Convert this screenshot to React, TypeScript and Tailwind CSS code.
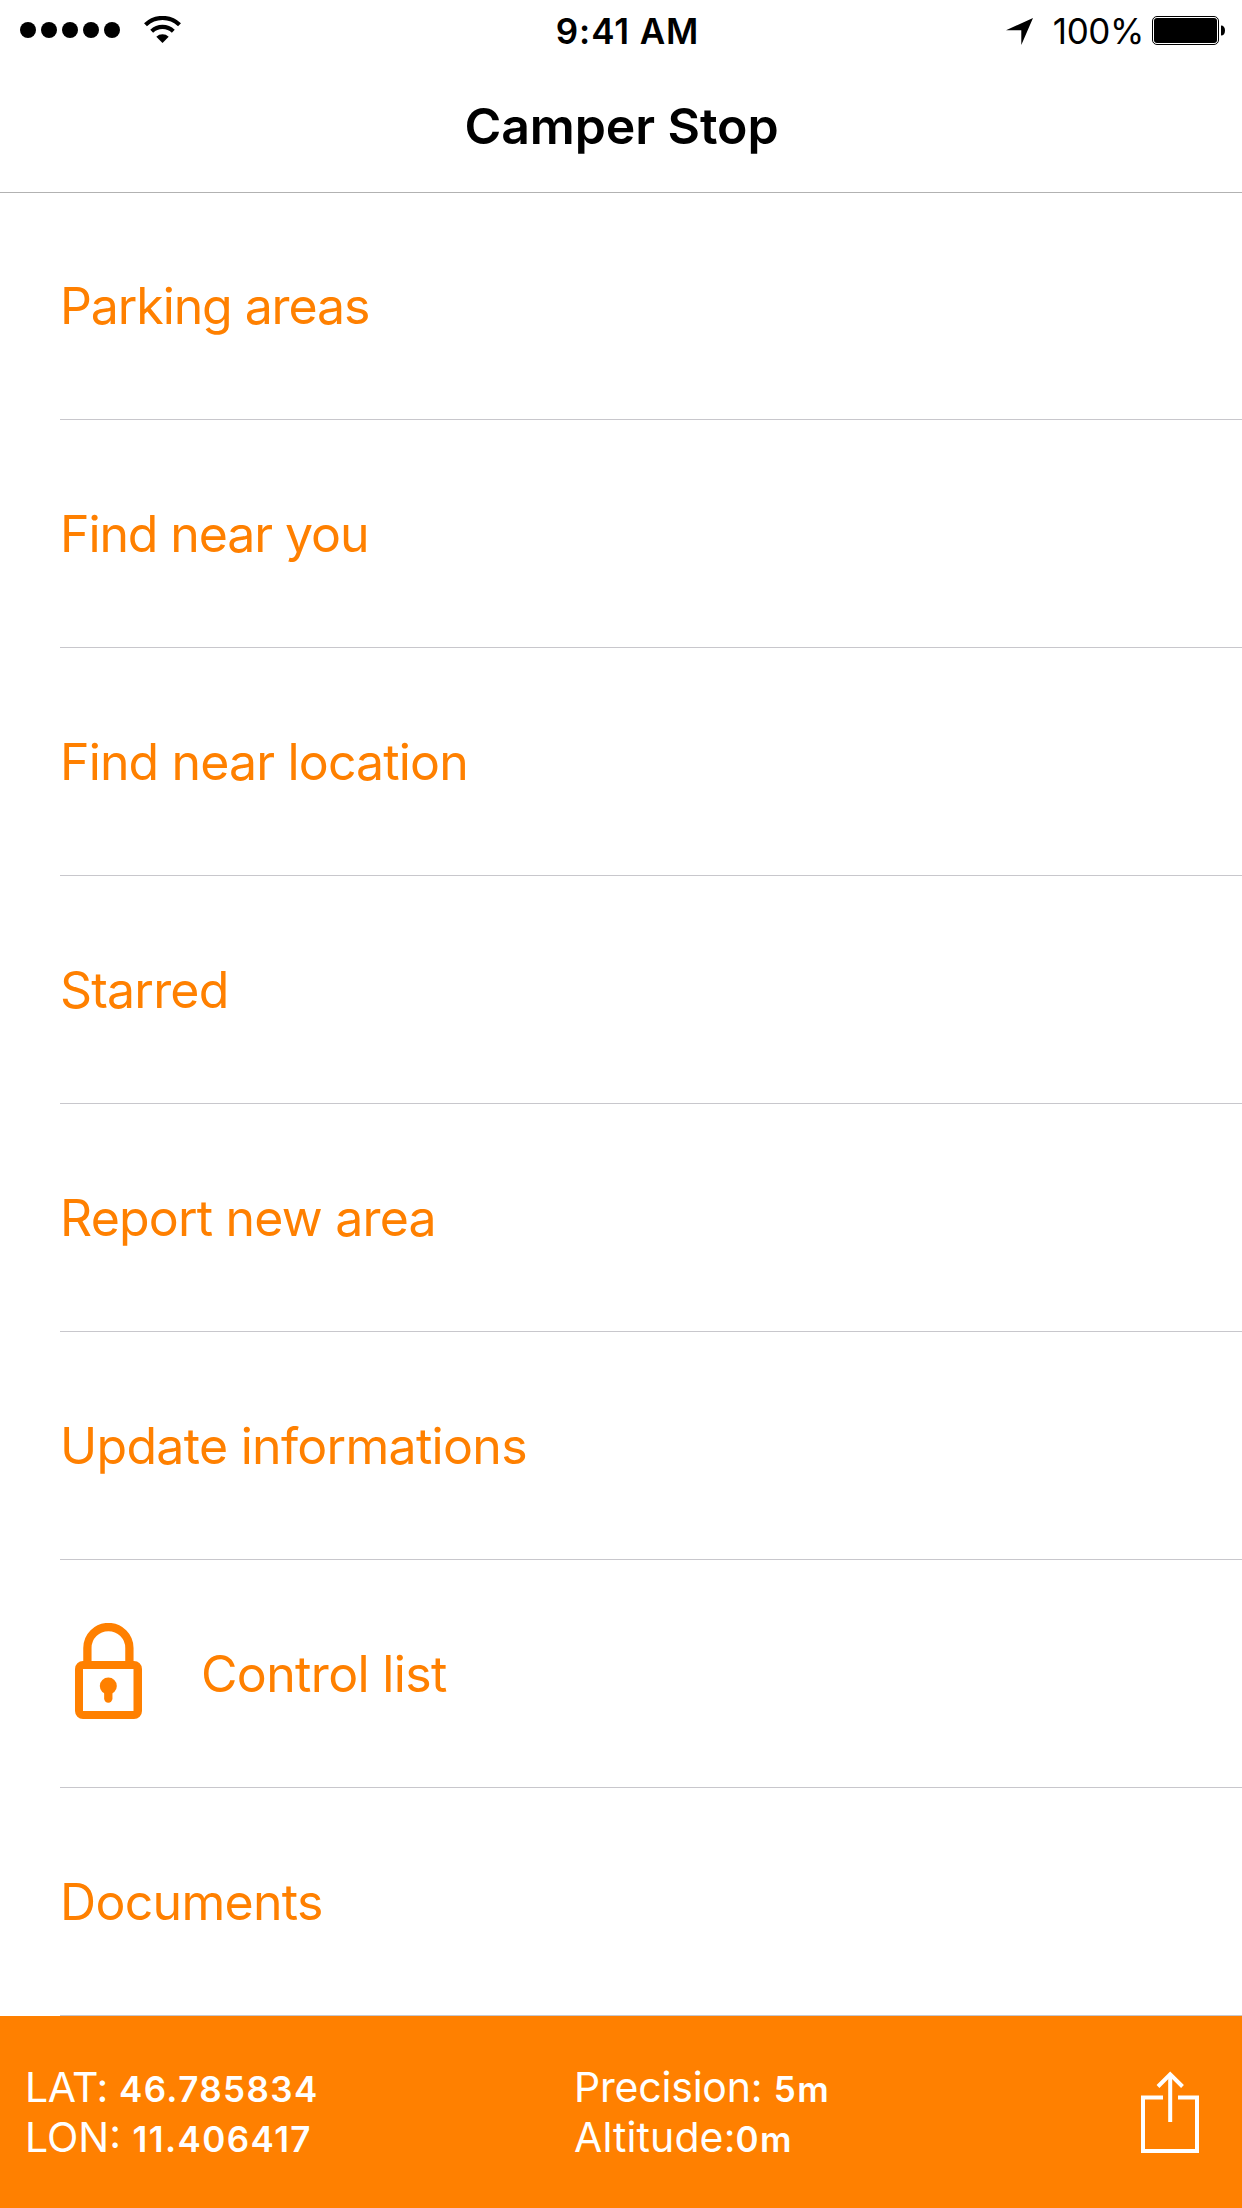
const menuItems = [
  { label: "Parking areas", tracking: "tracking-[-1.1px]" },
  { label: "Find near you", tracking: "tracking-[-1.1px]" },
  { label: "Find near location", tracking: "tracking-[-0.85px]" },
  { label: "Starred", tracking: "tracking-[-0.8px]" },
  { label: "Report new area", tracking: "tracking-[-0.8px]" },
  { label: "Update informations", tracking: "tracking-[-0.7px]" },
  { label: "Control list", tracking: "tracking-[-0.65px]", locked: true },
  { label: "Documents", tracking: "tracking-[-0.7px]" },
];

function WifiIcon() {
  return (
    <svg className="-mt-px ml-6 h-[27px] w-[37px]" viewBox="0 0 37 27" fill="none" stroke="#000" strokeWidth="4.2">
      <path d="M1.5 8.8a24.5 24.5 0 0 1 34 0" />
      <path d="M7.7 15.2a15.8 15.8 0 0 1 21.6 0" />
      <path d="M18.5 27l-6.2-6.3a9 9 0 0 1 12.4 0z" fill="#000" stroke="none" />
    </svg>
  );
}

function LocationIcon() {
  return (
    <svg className="mt-[3px] mr-5 h-[27px] w-[27px]" viewBox="0 0 27 27">
      <path d="M27 0L15.3 27V12.2H0z" />
    </svg>
  );
}

function BatteryIcon() {
  return (
    <svg className="mt-px ml-2 h-[29px] w-[74px]" viewBox="0 0 74 29">
      <rect x="0.5" y="0.5" width="66" height="28" rx="4.5" fill="none" stroke="#000" />
      <rect x="2" y="2" width="63" height="25" rx="3" />
      <path d="M69 9.5c2.7 0 4 2 4 5s-1.3 5-4 5z" />
    </svg>
  );
}

function LockIcon() {
  return (
    <svg className="mt-[-6px] mr-[59px] ml-[15px] h-[96px] w-[67px] shrink-0" viewBox="0 0 67 96" fill="none">
      <path d="M12.4 40V25a21 21 0 0 1 42 0v15" stroke="#ff8000" strokeWidth="8.3" />
      <path fillRule="evenodd" d="M8 38h51a8 8 0 0 1 8 8v42a8 8 0 0 1-8 8H8a8 8 0 0 1-8-8V46a8 8 0 0 1 8-8zM8 46v42h50.5V46z" fill="#ff8000" />
      <circle cx="33.3" cy="63" r="8.5" fill="#ff8000" />
      <path d="M33.3 63v12.5" stroke="#ff8000" strokeWidth="8.3" strokeLinecap="round" />
    </svg>
  );
}

function ShareIcon() {
  return (
    <svg className="h-[82px] w-[58px]" viewBox="0 0 58 82" fill="none" stroke="#fff" strokeWidth="4">
      <path d="M22 26.5H2v53.5h54V26.5H37" />
      <path d="M29.2 51V3" />
      <path d="M17 15.5L29.2 3.3 41.5 15.5" />
    </svg>
  );
}

function Value({ children }: { children: string }) {
  return <b className="text-[35px] leading-none font-semibold tracking-[1.4px]">{children}</b>;
}

export default function App() {
  return (
    <div className="flex h-[2208px] w-[1242px] flex-col overflow-hidden bg-white font-['Inter',sans-serif] text-black">
      <header className="h-[193px] shrink-0 border-b border-[#b2b2b2]">
        <div className="grid h-[60px] grid-cols-3 items-center">
          <div className="flex items-center pl-5">
            <div className="flex gap-[5px]">
              {[0, 1, 2, 3, 4].map(i => <span key={i} className="size-4 rounded-full bg-black" />)}
            </div>
            <WifiIcon />
          </div>
          <span className="pt-[3px] pl-[13px] text-center text-[35px] font-semibold tracking-[0.9px]">9:41 AM</span>
          <div className="flex items-center justify-end pr-4 text-[35px] leading-[53px]">
            <LocationIcon />
            <span className="pt-[3px] tracking-[-0.4px]">100%</span>
            <BatteryIcon />
          </div>
        </div>
        <h1 className="mt-[33px] pl-px text-center text-[50px] leading-[66px] font-semibold tracking-[-0.1px]">Camper Stop</h1>
      </header>
      <main className="-mt-px pl-[60px]">
        {menuItems.map(m => (
          <div key={m.label} className={`flex h-[228px] items-center border-b border-[#c8c7cc] pt-px text-[50px] text-[#ff8000] ${m.tracking}`}>
            {m.locked && <LockIcon />}
            {m.label}
          </div>
        ))}
      </main>
      <footer className="flex h-[192px] shrink-0 items-center justify-between bg-[#ff8000] pr-[43px] pl-[25px] text-[41px] leading-[50px] text-white">
        <div className="w-[549px]">
          <p className="tracking-[-0.5px]">LAT: <Value>46.785834</Value></p>
          <p>LON: <Value>11.406417</Value></p>
        </div>
        <div className="flex-1">
          <p className="tracking-[-0.2px]">Precision: <Value>5m</Value></p>
          <p className="tracking-[0.1px]">Altitude:<Value>0m</Value></p>
        </div>
        <ShareIcon />
      </footer>
    </div>
  );
}
